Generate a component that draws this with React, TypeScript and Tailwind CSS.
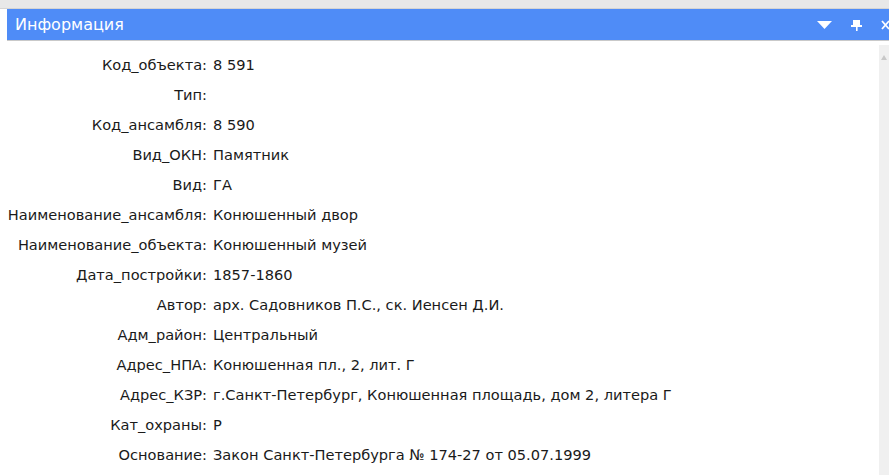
import * as React from 'react';

const fields: [string, string][] = [
  ['Код_объекта:', '8 591'],
  ['Тип:', ''],
  ['Код_ансамбля:', '8 590'],
  ['Вид_ОКН:', 'Памятник'],
  ['Вид:', 'ГА'],
  ['Наименование_ансамбля:', 'Конюшенный двор'],
  ['Наименование_объекта:', 'Конюшенный музей'],
  ['Дата_постройки:', '1857-1860'],
  ['Автор:', 'арх. Садовников П.С., ск. Иенсен Д.И.'],
  ['Адм_район:', 'Центральный'],
  ['Адрес_НПА:', 'Конюшенная пл., 2, лит. Г'],
  ['Адрес_КЗР:', 'г.Санкт-Петербург, Конюшенная площадь, дом 2, литера Г'],
  ['Кат_охраны:', 'Р'],
  ['Основание:', 'Закон Санкт-Петербурга № 174-27 от 05.07.1999'],
];

function PinIcon() {
  return (
    <svg width="13" height="12" viewBox="0 0 13 12" fill="white">
      <rect x="3" y="1" width="7" height="5" />
      <rect x="1" y="6" width="11" height="2" />
      <rect x="6" y="8" width="1.6" height="4" />
    </svg>
  );
}

export default function App() {
  return (
    <div className="w-[889px] h-[475px] overflow-hidden bg-white flex flex-col" style={{ fontFamily: '"DejaVu Sans", sans-serif' }}>
      <div className="h-[9px] bg-[#e8e8e8] border-b border-[#d4d4d4] shrink-0" />

      {/* panel header */}
      <div className="ml-[7px] h-[32px] bg-[#4f8cf7] flex items-center pl-[8px] shrink-0 border-b border-[#c9c9c9]">
        <span className="text-white text-[16px] leading-none">Информация</span>
        <div className="ml-auto flex items-center gap-[18px]">
          <svg width="15" height="8" viewBox="0 0 15 8" fill="white">
            <path d="M0 0 L15 0 L7.5 8 Z" />
          </svg>
          <PinIcon />
          <svg width="8" height="10" viewBox="0 0 8 10" stroke="white" strokeWidth="1.8" fill="none">
            <path d="M1 1 L8 9 M8 1 L1 9" />
          </svg>
        </div>
      </div>

      <div className="flex flex-1 min-h-0">
        {/* attribute list */}
        <div className="flex-1 pt-[9px] text-[14.6px] text-[#1a1a1a]">
          {fields.map(([label, value]) => (
            <div key={label} className="flex h-[30px] items-center">
              <div className="w-[207px] text-right whitespace-nowrap">{label}</div>
              <div className="pl-[6px] whitespace-nowrap">{value}</div>
            </div>
          ))}
        </div>

        {/* scrollbar */}
        <div className="w-[10px] mt-[4px] bg-[#f0f0f0] flex justify-center pt-[10px] shrink-0">
          <svg width="6" height="5" viewBox="0 0 6 5" fill="#c8c8c8">
            <path d="M3 0 L6 5 L0 5 Z" />
          </svg>
        </div>
      </div>
    </div>
  );
}
